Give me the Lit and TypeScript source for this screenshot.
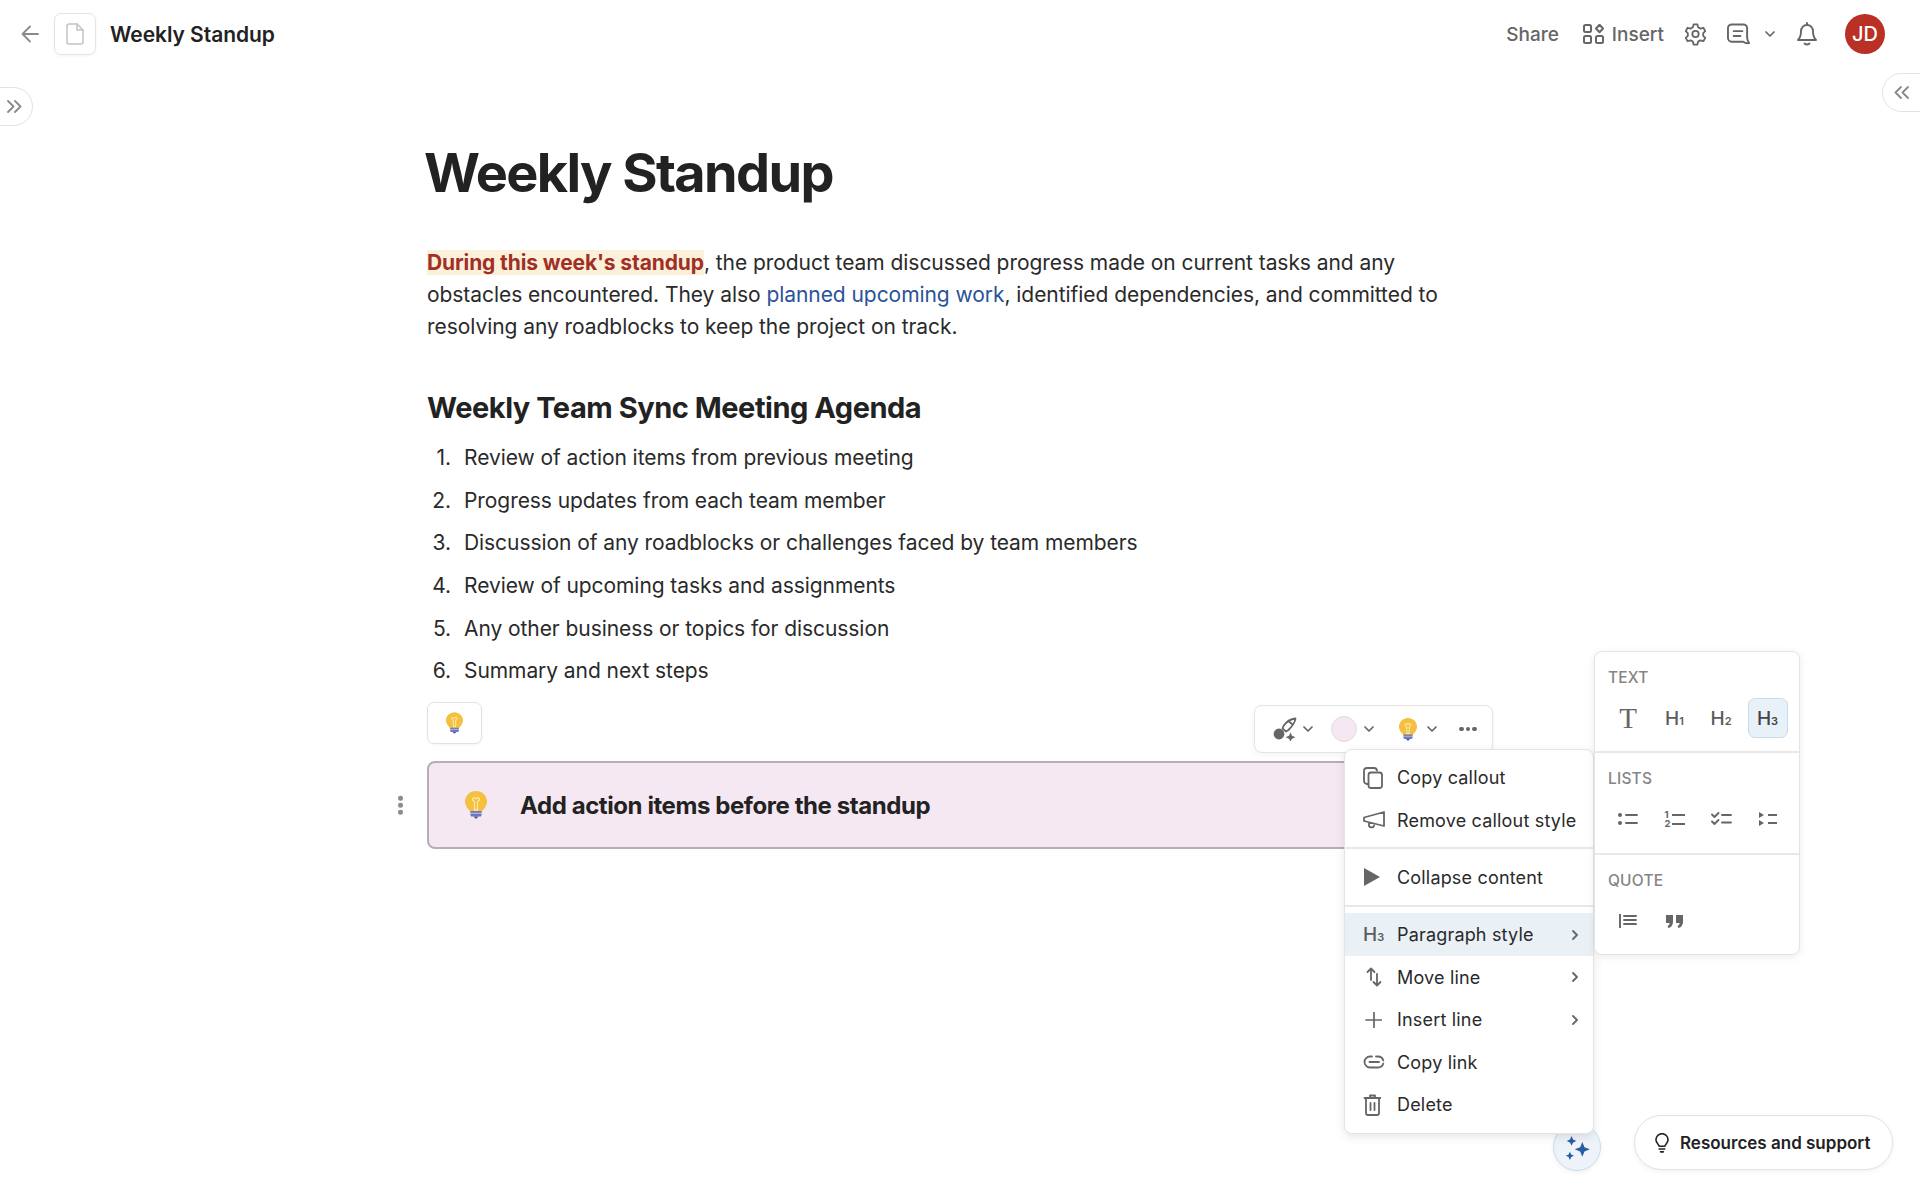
import { LitElement, html, css, svg } from "lit";
import { customElement } from "lit/decorators.js";

const ic = (w: number, h: number, vb: string, body: unknown, sw = 1.6, col = "currentColor") =>
  html`<svg width=${w} height=${h} viewBox=${vb} fill="none" stroke=${col} stroke-width=${sw} stroke-linecap="round" stroke-linejoin="round">${body}</svg>`;

const chev = (w = 10) => ic(w, w * 0.6, "0 0 10 6", svg`<path d="M1 1l4 4 4-4"/>`, 1.7);
const right = () => ic(6, 10, "0 0 6 10", svg`<path d="M1 1l4 4-4 4"/>`, 1.8);

const bulb = (w: number, h: number) => html`<svg width=${w} height=${h} viewBox="0 0 22 28" fill="none">
  <path d="M11 0C5 0 0 4.700 0 10.600c0 3.600 1.800 6 3.600 8 1 1.100 1.700 2 1.900 3.400h11c.2-1.400.9-2.300 1.900-3.400 1.800-2 3.600-4.400 3.600-8C22 4.700 17 0 11 0z" fill="#f5bf3f"/>
  <path d="M8 9.500c-1.500-2 1.300-3.700 3-1.700 1.700-2 4.500-.3 3 1.700l-1.500 1V19h-3v-8.500z" stroke="#fbe9a6" stroke-width="1.300" stroke-linejoin="round"/>
  <path d="M5.500 20h11v4.200c0 .8-.6 1.300-1.300 1.300H6.800c-.7 0-1.300-.5-1.300-1.300z" fill="#6f78bd"/>
  <path d="M5.500 22.300h11" stroke="#c8cbe6" stroke-width=".9"/>
  <path d="M8.500 25.500h5L11 28z" fill="#4a5296"/></svg>`;

const spark = html`<svg width="28" height="28" viewBox="0 0 26 26" fill="#2a5ba5">
  <path d="M17 6.500l2 4.800 5 2-5 2-2 4.800-2-4.800-5-2 5-2z"/>
  <path d="M7 1l1.400 3.100L11.500 5.500 8.400 6.900 7 10 5.600 6.900 2.500 5.500 5.600 4.100z"/>
  <path d="M5.500 15.500l1.200 2.600 2.600 1.200-2.600 1.200-1.200 2.600-1.200-2.600-2.600-1.200 2.600-1.200z"/></svg>`;

const agenda = [
  "Review of action items from previous meeting",
  "Progress updates from each team member",
  "Discussion of any roadblocks or challenges faced by team members",
  "Review of upcoming tasks and assignments",
  "Any other business or topics for discussion",
  "Summary and next steps",
];

@customElement("app-root")
export class AppRoot extends LitElement {
  static styles = css`
    :host {
      display: block;
      position: relative;
      width: 1920px;
      height: 1200px;
      overflow: hidden;
      background: #fff;
      font-family: Inter, "Liberation Sans", sans-serif;
      color: #222;
    }
    svg { display: block; flex: none; }
    .header { height: 68px; display: flex; align-items: center; padding: 0 35px 0 21px; }
    .back { color: #8a8a8a; margin-right: 15px; }
    .docbox {
      width: 42px; height: 42px; box-sizing: border-box; border: 1px solid #e4e4e4; border-radius: 7px;
      display: flex; align-items: center; justify-content: center; color: #c4c4c4; margin-right: 14px;
      box-shadow: 0 1px 3px rgba(0,0,0,.05);
    }
    .doctitle { font-size: 21px; font-weight: 600; letter-spacing: -.05px; color: #222; }
    .actions { margin-left: auto; display: flex; align-items: center; color: #666; font-size: 19px; font-weight: 500; }
    .share { margin-right: 24px; }
    .insert-ic { margin-right: 8px; }
    .insert { margin-right: 20px; }
    .gear { margin-right: 20px; }
    .chat { margin-right: 15px; }
    .chat-ch { margin-right: 22px; }
    .bell { margin-right: 28px; }
    .avatar {
      width: 40px; height: 40px; border-radius: 50%; background: #b93025; color: #fff;
      display: flex; align-items: center; justify-content: center; font-size: 20px; font-weight: 500;
    }
    .main { padding: 73px 0 0 427px; width: 1030px; }
    h1 { margin: 0 0 0 -3px; font-size: 54px; line-height: 64px; font-weight: 700; letter-spacing: -1.62px; color: #222; }
    .para { margin: 42px 0 0; font-size: 21px; line-height: 32px; color: #2a2a2a; letter-spacing: -.055px; }
    .mark { background: #fbf1da; color: #a12f25; font-weight: 700; letter-spacing: -.12px; }
    .link { color: #2a5298; }
    h2 { margin: 47px 0 0; font-size: 29px; line-height: 36px; font-weight: 700; letter-spacing: -.47px; color: #222; }
    ol { list-style: none; margin: 10px 0 0; padding: 0; }
    li { display: flex; height: 42.700px; align-items: center; font-size: 21px; letter-spacing: -.07px; color: #2a2a2a; }
    .num { width: 37px; text-align: right; padding-right: 13px; box-sizing: border-box; flex: none; }
    .iconbtn {
      margin-top: 10px; width: 55px; height: 42px; box-sizing: border-box; border: 1px solid #e2e2e2; border-radius: 7px;
      display: flex; align-items: center; justify-content: center; box-shadow: 0 1px 3px rgba(0,0,0,.05);
    }
    .callout {
      position: relative; margin-top: 17px; height: 88px; box-sizing: border-box; width: 1012px; background: #f5e8f2;
      border: 2px solid #b8adb6; border-radius: 8px; display: flex; align-items: center; padding-left: 36px;
    }
    .callout span { margin: 1px 0 0 33px; font-size: 24px; font-weight: 700; letter-spacing: -.42px; color: #222; }
    .grip { position: absolute; left: -31px; top: 50%; transform: translateY(-50%); display: flex; flex-direction: column; gap: 2.500px; }
    .grip i { width: 4.500px; height: 4.500px; border-radius: 50%; background: #8c8c8c; }

    .pill { position: absolute; box-sizing: border-box; border: 1px solid #e2e2e2; background: #fff; color: #8a8a8a; display: flex; align-items: center; }
    .pill-l { left: -10px; top: 87px; width: 43px; height: 39px; border-radius: 0 20px 20px 0; padding-left: 16px; }
    .pill-r { left: 1882px; top: 73px; width: 60px; height: 39px; border-radius: 20px 0 0 20px; padding-left: 11px; }

    .toolbar {
      position: absolute; left: 1254px; top: 705px; width: 239px; height: 48px; box-sizing: border-box; background: #fff;
      border: 1px solid #e4e4e4; border-radius: 8px; display: flex; align-items: center; padding-left: 18px; color: #666;
      box-shadow: 0 2px 6px rgba(0,0,0,.05);
    }
    .swatch { width: 26px; height: 26px; border-radius: 50%; background: #f5e8f2; border: 1px solid #e4dbe2; box-sizing: border-box; }
    .dots { display: flex; gap: 2px; }
    .dots i { width: 4.500px; height: 4.500px; border-radius: 50%; background: #666; }
    .m7 { margin-left: 6px; }
    .m18 { margin-left: 18px; }
    .m6 { margin-left: 7px; }
    .m26 { margin-left: 25px; }
    .m10 { margin-left: 10px; }
    .m21 { margin-left: 22px; }

    .menu {
      position: absolute; left: 1344px; top: 749px; width: 250px; height: 385px; box-sizing: border-box; background: #fff;
      border: 1px solid #e4e4e4; border-radius: 8px; box-shadow: 0 3px 10px rgba(0,0,0,.1); padding-top: 6.500px; z-index: 2;
      color: #2a2a2a; font-size: 18px; letter-spacing: .18px;
    }
    .row { display: flex; align-items: center; height: 42.600px; padding-left: 18px; color: #666; }
    .row b { font-weight: 400; color: #2a2a2a; margin-left: 0; }
    .slot { width: 34px; flex: none; display: flex; align-items: center; }
    .row .arr { margin-left: auto; margin-right: 15px; color: #666; }
    .row.active { background: #e9f0f6; }
    .sep { height: 2px; background: #e8e8e8; margin: 5.500px 0 7px; }
    .sep.tight { margin: 6.500px 0 6px; }
    .hs { font-weight: 500; font-size: 19px; color: #5c5c5c; white-space: nowrap; line-height: 1; letter-spacing: 0; }
    .hs small { font-size: 11px; font-weight: 600; }

    .sub {
      position: absolute; left: 1594px; top: 651px; width: 206px; height: 304px; box-sizing: border-box; background: #fff;
      border: 1px solid #e4e4e4; border-radius: 8px; box-shadow: 0 2px 8px rgba(0,0,0,.08); z-index: 3;
    }
    .sec { height: 101px; padding: 16px 0 0 13px; box-sizing: border-box; border-bottom: 2px solid #e8e8e8; }
    .sec.mid { height: 102px; }
    .sec:last-child { border-bottom: 0; }
    .lbl { font-size: 15.500px; font-weight: 500; color: #858585; letter-spacing: .2px; line-height: 20px; }
    .cells { display: flex; margin-top: 10px; color: #666; }
    .cell { width: 40px; height: 40px; margin-right: 6.500px; box-sizing: border-box; display: flex; align-items: center; justify-content: center; border-radius: 7px; border: 1px solid transparent; }
    .cell.on { background: #e9f1f8; border-color: #c5dcee; }
    .cell.on .hs { color: #444; }
    .serif { font-family: "Liberation Serif", serif; font-size: 29px; color: #666; line-height: 1; font-weight: 400; }
    .numlist { display: grid; grid-template-columns: 7px 13px; align-items: center; row-gap: 0; font-size: 9.500px; font-weight: 700; line-height: 9px; color: #666; }
    .numlist i { display: block; height: 2px; background: #666; }

    .fab {
      position: absolute; left: 1553px; top: 1123px; width: 48px; height: 48px; box-sizing: border-box; border-radius: 50%;
      background: #edf3f9; border: 1px solid #c9deef; display: flex; align-items: center; justify-content: center;
      box-shadow: 0 2px 5px rgba(0,0,0,.06); padding: 3px 0 0 1px;
    }
    .help {
      position: absolute; left: 1634px; top: 1115px; width: 259px; height: 55px; box-sizing: border-box; border-radius: 28px;
      background: #fff; border: 1px solid #e2e2e2; display: flex; align-items: center; padding-left: 20px;
      font-size: 17px; font-weight: 600; color: #222; box-shadow: 0 2px 5px rgba(0,0,0,.05);
    }
    .help svg { margin-right: 11px; }
  `;

  render() {
    return html`
      <div class="header">
        <span class="back">${ic(18, 18, "0 0 18 18", svg`<path d="M17 9H1.500M9 1.500L1.500 9 9 16.500"/>`, 1.8)}</span>
        <div class="docbox">${ic(18, 22, "0 0 18 22", svg`<path d="M1 3a2 2 0 012-2h8l6 6v12a2 2 0 01-2 2H3a2 2 0 01-2-2z"/><path d="M11 1v6h6"/>`, 1.5)}</div>
        <div class="doctitle">Weekly Standup</div>
        <div class="actions">
          <span class="share">Share</span>
          <span class="insert-ic">${ic(21, 20, "0 0 21 20", svg`<rect x="1" y="1" width="7" height="7" rx="1.500"/><rect x="1" y="12" width="7" height="7" rx="1.500"/><rect x="13" y="12" width="7" height="7" rx="1.500"/><path d="M16.500.8l3.500 3.700-3.500 3.700L13 4.500z"/>`, 2)}</span>
          <span class="insert">Insert</span>
          <span class="gear">${ic(23, 24, "0 0 24 24", svg`<circle cx="12" cy="12" r="3.300"/><path d="M10 2h4l.7 3 2.500 1.400 3-.9 2 3.500-2.200 2.100v2.800l2.200 2.100-2 3.500-3-.9-2.500 1.400-.7 3h-4l-.7-3-2.500-1.400-3 .9-2-3.500 2.200-2.100v-2.800L1.800 9l2-3.500 3 .9L9.300 5z"/>`, 1.9)}</span>
          <span class="chat">${ic(23, 22, "0 0 24 22", svg`<path d="M5 1h12a4 4 0 014 4v10c0 2 .8 3.500 2 5.500-2.500.3-4.500-.2-6-1.500H5a4 4 0 01-4-4V5a4 4 0 014-4z"/><path d="M7 8h9M7 13h7"/>`, 2)}</span>
          <span class="chat-ch">${chev(10)}</span>
          <span class="bell">${ic(20, 24, "0 0 20 24", svg`<path d="M10 1v2M10 3c-3.600 0-6 2.700-6 6.300 0 5-1.300 7-3 8.700h18c-1.700-1.700-3-3.700-3-8.700C16 5.700 13.600 3 10 3zM7.500 21.500c1.500 1.300 3.500 1.300 5 0"/>`, 1.9)}</span>
          <div class="avatar">JD</div>
        </div>
      </div>

      <div class="pill pill-l">${ic(15, 13, "0 0 15 13", svg`<path d="M1 1l5.500 5.500L1 12M8 1l5.500 5.500L8 12"/>`, 1.8)}</div>
      <div class="pill pill-r">${ic(15, 13, "0 0 15 13", svg`<path d="M7 1L1.500 6.500 7 12M14 1L8.500 6.500 14 12"/>`, 1.8)}</div>

      <div class="main">
        <h1>Weekly Standup</h1>
        <p class="para"><span class="mark">During this week's standup</span>, the product team discussed progress made on current tasks and any obstacles encountered. They also <span class="link">planned upcoming work</span>, identified dependencies, and committed to resolving any roadblocks to keep the project on track.</p>
        <h2>Weekly Team Sync Meeting Agenda</h2>
        <ol>${agenda.map((t, i) => html`<li><span class="num">${i + 1}.</span>${t}</li>`)}</ol>
        <div class="iconbtn">${bulb(17, 22)}</div>
        <div class="callout">
          <div class="grip"><i></i><i></i><i></i></div>
          ${bulb(22, 28)}
          <span>Add action items before the standup</span>
        </div>
      </div>

      <div class="toolbar">
        <svg width="24" height="24" viewBox="0 0 24 24" fill="none" stroke="#666" stroke-width="1.800" stroke-linejoin="round"><path d="M22.500 1.500c-5 .5-9 3-12 7.500l-1 2.500 3.500 3 2.500-1.500c3.500-3.500 6.500-7 7-11.500z"/><path d="M16 4.500l3.500 3" /><circle cx="6" cy="17" r="4.500" fill="#666"/><path d="M17.500 15.500l1.500 3.300 3.500 1.500-3.500 1.500-1.500 2.700-1.500-2.700-3.500-1.500 3.500-1.500z" fill="#666" stroke="none"/></svg>
        <span class="m7">${chev(10)}</span>
        <span class="m18 swatch"></span>
        <span class="m6">${chev(10)}</span>
        <span class="m26">${bulb(18, 23)}</span>
        <span class="m10">${chev(10)}</span>
        <span class="m21 dots"><i></i><i></i><i></i></span>
      </div>

      <div class="menu">
        <div class="row"><span class="slot">${ic(20, 22, "0 0 20 22", svg`<rect x="5.500" y="5.500" width="13.500" height="15.500" rx="2.500"/><path d="M5.500 17H4a3 3 0 01-3-3V4a3 3 0 013-3h7a3 3 0 013 2.500"/>`, 1.8)}</span><b>Copy callout</b></div>
        <div class="row"><span class="slot">${ic(22, 18, "0 0 22 18", svg`<path d="M21 1v14L1 10V6.500zM6 11.500v2a2.500 2.500 0 005 .8"/>`, 1.8)}</span><b>Remove callout style</b></div>
        <div class="sep"></div>
        <div class="row"><span class="slot"><svg width="18" height="20" viewBox="0 0 18 20"><path d="M1 1l16 9-16 9z" fill="#666"/></svg></span><b>Collapse content</b></div>
        <div class="sep tight"></div>
        <div class="row active"><span class="slot"><span class="hs">H<small>3</small></span></span><b>Paragraph style</b><span class="arr">${right()}</span></div>
        <div class="row"><span class="slot">${ic(19, 20, "-3 0 19 20", svg`<path d="M5 13V2M1.500 5L5 1.500 8.500 5M11 7v11M7.500 15l3.500 3.500 3.500-3.500"/>`, 1.8)}</span><b>Move line</b><span class="arr">${right()}</span></div>
        <div class="row"><span class="slot">${ic(19, 16, "-3 0 19 16", svg`<path d="M8 0v16M0 8h16"/>`, 1.7)}</span><b>Insert line</b><span class="arr">${right()}</span></div>
        <div class="row"><span class="slot">${ic(22, 14, "0 0 22 14", svg`<path d="M9 1.500H7a5.500 5.500 0 000 11h8a5.500 5.500 0 005.300-4M13 1.500h2a5.500 5.500 0 015.300 4M6.500 7h9.500"/>`, 1.8)}</span><b>Copy link</b></div>
        <div class="row"><span class="slot">${ic(18, 22, "-1 0 18 22", svg`<path d="M2 5v14a2 2 0 002 2h9a2 2 0 002-2V5M.5 4h16M6 4V1.500h5V4M6.500 9v7M10.500 9v7"/>`, 1.8)}</span><b>Delete</b></div>
      </div>

      <div class="sub">
        <div class="sec">
          <div class="lbl">TEXT</div>
          <div class="cells">
            <div class="cell"><span class="serif">T</span></div>
            <div class="cell"><span class="hs">H<small>1</small></span></div>
            <div class="cell"><span class="hs">H<small>2</small></span></div>
            <div class="cell on"><span class="hs">H<small>3</small></span></div>
          </div>
        </div>
        <div class="sec mid">
          <div class="lbl">LISTS</div>
          <div class="cells">
            <div class="cell">${ic(20, 14, "0 0 20 14", svg`<circle cx="2" cy="3" r="2" fill="#666" stroke="none"/><circle cx="2" cy="11" r="2" fill="#666" stroke="none"/><path d="M8 3h11M8 11h11"/>`, 1.9)}</div>
            <div class="cell"><div class="numlist"><span>1</span><i></i><span>2</span><i></i></div></div>
            <div class="cell">${ic(21, 14, "0 0 21 14", svg`<path d="M1 2.500l2.500 2.500L7.500 1M1 9.500L3.500 12l4-4M11 3h9M11 10.500h9"/>`, 1.9)}</div>
            <div class="cell"><svg width="20" height="14" viewBox="0 0 20 14" fill="none" stroke="#666" stroke-width="1.900"><path d="M1 0l5 3-5 3zM1 8l5 3-5 3z" fill="#666" stroke="none"/><path d="M10 3h9M10 11h9"/></svg></div>
          </div>
        </div>
        <div class="sec">
          <div class="lbl">QUOTE</div>
          <div class="cells">
            <div class="cell">${ic(18, 14, "0 0 18 14", svg`<path d="M1 0v14M5 2h12M5 6h12M5 10h12"/>`, 1.9)}</div>
            <div class="cell"><svg width="17" height="13" viewBox="0 0 17 13" fill="#666"><path d="M0 0h7v6.500C7 10 5 12.500 2.500 13L1.500 11c1.200-.4 2-1.300 2.100-3H0zM10 0h7v6.500c0 3.500-2 6-4.500 6.500l-1-2c1.200-.4 2-1.300 2.100-3H10z"/></svg></div>
          </div>
        </div>
      </div>

      <div class="fab">${spark}</div>
      <div class="help">
        ${ic(14, 20, "0 0 15 21", svg`<path d="M4.500 14c0-1.700-3.500-3.500-3.500-7a6.500 6.500 0 0113 0c0 3.500-3.500 5.300-3.500 7zM4.500 17h6M6 20h3"/>`, 1.7)}
        Resources and support
      </div>
    `;
  }
}
